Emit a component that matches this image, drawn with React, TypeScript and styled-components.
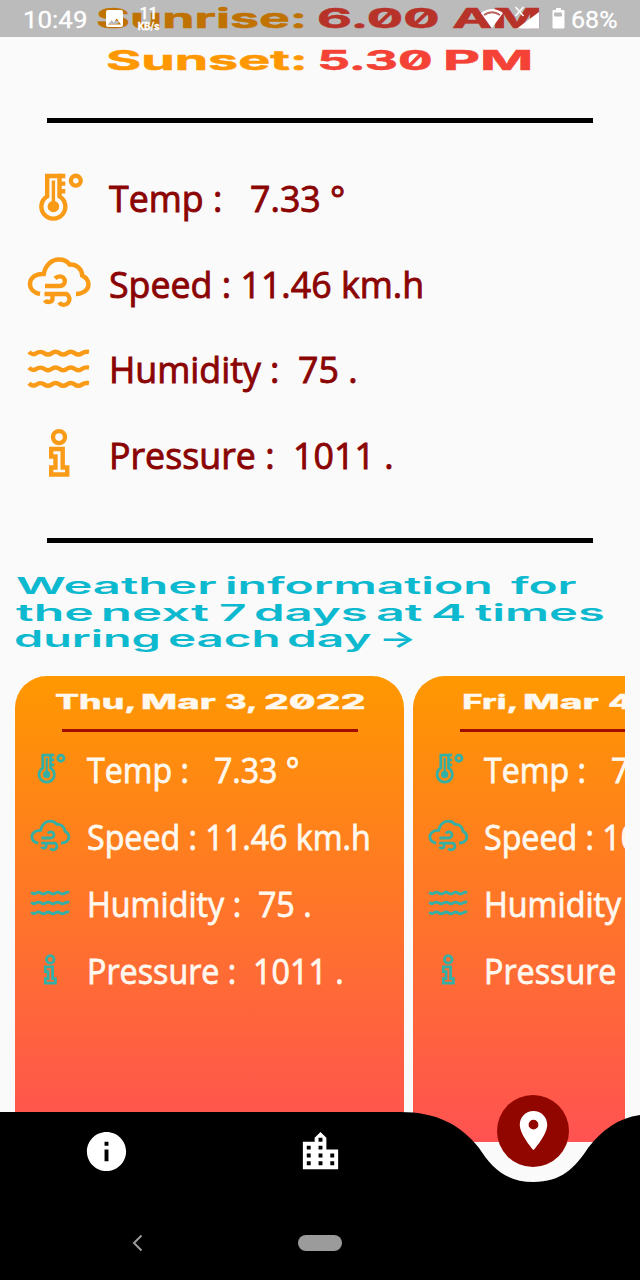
import React, { useLayoutEffect, useRef, useState } from "react";
import styled, { createGlobalStyle } from "styled-components";
import { MdInfo, MdLocationCity, MdLocationOn } from "react-icons/md";

const GlobalStyle = createGlobalStyle`
  * { box-sizing: border-box; }
  body { margin: 0; background: #fafafa; }
`;

const bodyFont = `"Open Sans", "Noto Sans", sans-serif`;
const displayFont = `Inter, "Liberation Sans", sans-serif`;

/* ---------- text stretched to a given width ---------- */

const FitBox = styled.span<{ $width: number }>`
  display: block;
  flex: none;
  width: ${(p) => p.$width}px;
  white-space: pre;
`;

const FitInner = styled.span`
  display: inline-block;
  transform-origin: 0 50%;
`;

/* `flush` removes the first letter's side bearing, so that its ink starts at the box edge. */
function Fit({ width, flush, children }: { width: number; flush?: boolean; children: string }) {
  const ref = useRef<HTMLSpanElement>(null);
  const [transform, setTransform] = useState("none");
  useLayoutEffect(() => {
    if (!ref.current) return;
    const cs = getComputedStyle(ref.current);
    const ctx = document.createElement("canvas").getContext("2d");
    if (!ctx) return;
    ctx.font = `${cs.fontWeight} ${cs.fontSize} ${cs.fontFamily}`;
    const m = ctx.measureText(children);
    const scale = width / (m.actualBoundingBoxLeft + m.actualBoundingBoxRight);
    const shift = flush ? m.actualBoundingBoxLeft * scale : 0;
    setTransform(`translateX(${shift}px) scaleX(${scale})`);
  }, [width, flush, children]);
  return (
    <FitBox $width={width}>
      <FitInner ref={ref} style={{ transform }}>{children}</FitInner>
    </FitBox>
  );
}

/* ---------- page ---------- */

const Screen = styled.div`
  position: relative;
  width: 640px;
  height: 1280px;
  overflow: hidden;
  background: #fafafa;
`;

const Content = styled.main`
  display: flex;
  flex-direction: column;
`;

const SunTimes = styled.section`
  display: flex;
  flex-direction: column;
  margin-top: -3px;
  font: 700 27.5px/42px ${displayFont};
  font-feature-settings: "zero" 1;
  -webkit-text-stroke: 0.5px currentColor;
`;

const SunLine = styled.div<{ $left: number }>`
  display: flex;
  height: 42px;
  padding-left: ${(p) => p.$left}px;
  color: #f44336;
`;

const SunLabel = styled.span`
  margin-right: 16px;
  color: #ff9800;
`;

const SunHour = styled.span`
  margin-right: 13px;
`;

const Divider = styled.hr<{ $top: number }>`
  width: 546px;
  height: 5px;
  margin: ${(p) => p.$top}px 0 0 47px;
  border: 0;
  background: #000;
`;

const Metrics = styled.section`
  display: flex;
  flex-direction: column;
  margin-top: 32px;
  padding-left: 27px;
  color: #8b0404;
  font: 500 37px/50px ${bodyFont};
  -webkit-text-stroke: 0.9px currentColor;
`;

const MetricRow = styled.div<{ $height: number; $gap: number }>`
  display: flex;
  align-items: center;
  height: ${(p) => p.$height}px;
  gap: ${(p) => p.$gap}px;
`;

const MetricText = styled.div<{ $compact?: boolean }>`
  padding-top: ${(p) => (p.$compact ? 2 : 0.5)}px;
`;

const MetricIcon = styled.svg<{ $width: number; $color: string }>`
  flex: none;
  width: ${(p) => p.$width}px;
  height: ${(p) => (p.$width * 54) / 64}px;
  overflow: visible;
  color: ${(p) => p.$color};
  fill: none;
  stroke: currentColor;
  stroke-width: 4.4;
`;

const Headline = styled.h2`
  margin: 30.3px 0 0;
  padding-left: 16px;
  color: #0db9cf;
  font: 600 23.4px/26.4px ${displayFont};
`;

const HeadLine = styled.div`
  display: flex;
  height: 26.4px;
  gap: 10.5px;
`;

const HeadSpace = styled.span`
  width: 0;
`;

const CardList = styled.section`
  display: flex;
  gap: 8.5px;
  width: 610px;
  height: 466px;
  margin: 23.5px 0 0 15px;
  overflow: hidden;
`;

const Card = styled.article`
  flex: none;
  display: flex;
  flex-direction: column;
  width: 389px;
  padding: 11px 0 0 15px;
  border-radius: 32px 32px 0 0;
  background: linear-gradient(#ff9800, #ff5252);
  color: #fff8ee;
  font: 500 34px/46px ${bodyFont};
  -webkit-text-stroke: 0.8px currentColor;
`;

const CardTitle = styled.h3`
  display: flex;
  justify-content: center;
  gap: 8px;
  height: 30px;
  margin: 0 0 0 -16px;
  font: 800 20px/30px ${displayFont};
  font-feature-settings: "zero" 1;
  -webkit-text-stroke: 0.3px currentColor;
`;

const CardRule = styled.hr`
  width: 296px;
  height: 3px;
  margin: 12px 0 4px 32px;
  border: 0;
  background: #a00c00;
`;

/* ---------- metric drawings ---------- */

type Kind = "temp" | "wind" | "humidity" | "pressure";

const wave = (y: number) =>
  `M2 ${y - 1.6}c2.500 2.800 5.500 2.800 7.600 1.200s5.400-1.600 7.600 0 5.400 1.600 7.600 0 5.400-1.600 7.600 0 5.400 1.600 7.600 0 5.400-1.600 7.600 0 5.400 1.600 7.600 0 3-1.800 6.800-1.200`;

function Drawing({ kind }: { kind: Kind }) {
  switch (kind) {
    case "temp":
      return (
        <g transform="translate(0 1)">
          <path d="M20.2 24.3V4h12.3v20.3A12 12 0 1 1 20.2 24.3z" />
          <path d="M32 4h6.300M32 11.600h6.300M32 19.200h6.300" />
          <path d="M26.400 8.500V34" strokeWidth="3.400" />
          <circle cx="26.400" cy="34.500" r="3.600" fill="currentColor" />
          <circle cx="48.800" cy="8.700" r="4.900" />
        </g>
      );
    case "wind":
      return (
        <g transform="translate(0 -1.5)">
          <path d="M13 39.500C7 38.500 3 34.500 3 29.500C3 23.500 8.500 19 16.800 19.500C18 11 24.500 5 32 5C37 5 40.500 7 42.500 10C49.500 9.500 55 14.500 55.200 21C59 23 61.500 26 61.500 30C61.500 35.500 56 39.500 49 39.500" />
          <path d="M18 31.500h15a4.700 4.700 0 0 0 0-9.600c-2 0-3.500.6-5 2" />
          <path d="M17.500 39.500h22a5.800 5.800 0 1 1-7.500 8.500" />
          <path d="M18 45.500c1.500 3 7.500 2.500 7.500-1.500v-4" />
        </g>
      );
    case "humidity":
      return (
        <g>
          <path d={wave(11.5)} />
          <path d={wave(27.2)} />
          <path d={wave(42.8)} />
        </g>
      );
    default:
      return (
        <g transform="translate(0 0.5)">
          <circle cx="32" cy="9.600" r="6" />
          <path d="M24.200 21.500h11.500v18.500h4.500v7H24.200v-7h4.300v-11h-4.300z" />
        </g>
      );
  }
}

type Metric = { kind: Kind; text: string; big: number; small: number };

const today: Metric[] = [
  { kind: "temp", text: "Temp :   7.33 °", big: 234.5, small: 211 },
  { kind: "wind", text: "Speed : 11.46 km.h", big: 311.5, small: 281 },
  { kind: "humidity", text: "Humidity :  75 .", big: 244, small: 220 },
  { kind: "pressure", text: "Pressure :  1011 .", big: 280, small: 252 },
];

const tomorrow: Metric[] = [
  { kind: "temp", text: "Temp :   7.33 °", big: 234.5, small: 211 },
  { kind: "wind", text: "Speed : 10.46 km.h", big: 311.5, small: 281 },
  today[2],
  today[3],
];

const days = [
  { words: [["Thu,", 80], ["Mar", 74], ["3,", 31], ["2022", 100]] as [string, number][], rows: today },
  { words: [["Fri,", 53], ["Mar", 75], ["4,", 34], ["2022", 100]] as [string, number][], rows: tomorrow },
];

const headline: [string, number][][] = [
  [["Weather", 200], ["information", 263], ["", 0], ["for", 65]],
  [["the", 76], ["next", 105.5], ["7", 26.5], ["days", 110], ["at", 46], ["4", 32], ["times", 128]],
  [["during", 143.5], ["each", 108], ["day", 83], ["→", 32]],
];

/* ---------- status bar ---------- */

const StatusBar = styled.header`
  position: absolute;
  inset: 0 0 auto 0;
  display: flex;
  justify-content: space-between;
  height: 37px;
  padding: 0 25px 0 22.5px;
  background: rgba(0, 0, 0, 0.25);
  color: #fff;
  font: 400 24.5px/39px Roboto, sans-serif;
  -webkit-text-stroke: 0.3px currentColor;
`;

const StatusGroup = styled.div`
  display: flex;
`;

const StatusIcon = styled.svg`
  display: block;
  height: 37px;
  fill: #fff;
`;

const NetSpeed = styled.div`
  display: flex;
  flex-direction: column;
  align-items: center;
  width: 24px;
  margin: 5px 0 0 13.5px;
  font: 500 16px/18px Roboto, sans-serif;
`;

const NetUnit = styled.span`
  margin-top: -1px;
  font: 700 10px/10px Roboto, sans-serif;
`;

/* ---------- bottom navigation ---------- */

const BottomNav = styled.nav`
  position: absolute;
  inset: 1094px 0 0 0;
`;

const NavShape = styled.svg`
  position: absolute;
  inset: 0;
  display: block;
  fill: #000;
`;

const NavItems = styled.div`
  position: relative;
  display: grid;
  grid-template-columns: repeat(3, 213.4px);
  height: 114px;
  color: #fff;
`;

const NavItem = styled.div`
  display: flex;
  justify-content: center;
  padding-top: 34px;
`;

const FloatingButton = styled.div`
  display: flex;
  align-items: center;
  justify-content: center;
  width: 72px;
  height: 72px;
  margin: 0.5px auto 0;
  border-radius: 50%;
  background: #920600;
`;

const SystemKeys = styled.div`
  position: relative;
  display: flex;
  align-items: center;
  height: 69px;
  padding-left: 132px;
  gap: 155px;
`;

const HomePill = styled.div`
  width: 44px;
  height: 16px;
  border-radius: 8px;
  background: #9b9b9b;
`;

function MetricList({ rows, compact }: { rows: Metric[]; compact?: boolean }) {
  return (
    <>
      {rows.map((m) => (
        <MetricRow key={m.kind} $height={compact ? 67 : 85.5} $gap={compact ? 16 : 17.5}>
          <MetricIcon
            viewBox="0 0 64 54"
            $width={compact ? 40.5 : 64}
            $color={compact ? "#33b0a6" : "#f99b16"}
          >
            <Drawing kind={m.kind} />
          </MetricIcon>
          <MetricText $compact={compact}>
            <Fit width={compact ? m.small : m.big}>{m.text}</Fit>
          </MetricText>
        </MetricRow>
      ))}
    </>
  );
}

export default function App() {
  return (
    <Screen>
      <GlobalStyle />
      <Content>
        <SunTimes>
          <SunLine $left={98}>
            <SunLabel><Fit flush width={205}>Sunrise:</Fit></SunLabel>
            <SunHour><Fit flush width={119.5}>6.00</Fit></SunHour>
            <Fit flush width={87}>AM</Fit>
          </SunLine>
          <SunLine $left={107.5}>
            <SunLabel><Fit flush width={195.5}>Sunset:</Fit></SunLabel>
            <SunHour><Fit flush width={112.5}>5.30</Fit></SunHour>
            <Fit flush width={85}>PM</Fit>
          </SunLine>
        </SunTimes>
        <Divider $top={37} />
        <Metrics>
          <MetricList rows={today} />
        </Metrics>
        <Divider $top={41} />
        <Headline>
          {headline.map((line, i) => (
            <HeadLine key={i}>
              {line.map(([word, width], j) =>
                word ? <Fit flush key={j} width={width}>{word}</Fit> : <HeadSpace key={j} />
              )}
            </HeadLine>
          ))}
        </Headline>
        <CardList>
          {days.map((day) => (
            <Card key={day.words[0][0]}>
              <CardTitle>
                {day.words.map(([word, width]) => (
                  <Fit flush key={word} width={width}>{word}</Fit>
                ))}
              </CardTitle>
              <CardRule />
              <MetricList rows={day.rows} compact />
            </Card>
          ))}
        </CardList>
      </Content>

      <StatusBar>
        <StatusGroup>
          <Fit width={61.5}>10:49</Fit>
          <StatusIcon width="39" viewBox="0 0 39 37">
            <path
              fillRule="evenodd"
              d="M24 10h13q2 0 2 2v13q0 2-2 2H24q-2 0-2-2V12q0-2 2-2zM24 24.500h13l-4.300-6-3 4-2-2.500z"
            />
          </StatusIcon>
          <NetSpeed>
            11
            <NetUnit>KB/s</NetUnit>
          </NetSpeed>
        </StatusGroup>
        <StatusGroup>
          <StatusIcon width="91" viewBox="480 0 91 37">
            <path d="M481 13q11-8 22 0l-11 15z" />
            <path d="M484 15q8-5.500 16 0" fill="none" stroke="#b9625c" strokeWidth="1.8" />
            <path d="M539 12v16.500h-22z" />
            <path d="M515.500 7l8 9M523.500 7l-8 9" fill="none" stroke="#fff" strokeWidth="1.5" />
            <path d="M556 8h5v2h2.500q1 0 1 1v16.500q0 1-1 1h-10q-1 0-1-1V11q0-1 1-1h2.500z" />
            <rect x="554" y="12.500" width="8" height="4" rx="1" fill="#bbb" />
          </StatusIcon>
          <Fit width={44.5}>68%</Fit>
        </StatusGroup>
      </StatusBar>

      <BottomNav>
        <NavShape width="640" height="186" viewBox="0 1094 640 186">
          <path d="M0 1112H400C437 1112 461 1125 479 1148C492 1168 506 1182 533.500 1182C561 1182 575 1168 588 1148C602 1130 618 1118 640 1115V1280H0z" />
        </NavShape>
        <NavItems>
          <NavItem><MdInfo size={47} /></NavItem>
          <NavItem><MdLocationCity size={47} /></NavItem>
          <div>
            <FloatingButton><MdLocationOn size={47} /></FloatingButton>
          </div>
        </NavItems>
        <SystemKeys>
          <svg width="11" height="18" viewBox="0 0 11 18">
            <path d="M9.500 1.500L2 9l7.500 7.500" fill="none" stroke="#9b9b9b" strokeWidth="2" />
          </svg>
          <HomePill />
        </SystemKeys>
      </BottomNav>
    </Screen>
  );
}
